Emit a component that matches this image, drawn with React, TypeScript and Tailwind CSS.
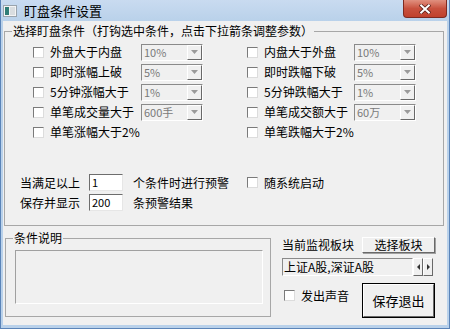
import React from 'react';

const leftRows = [
  { label: '外盘大于内盘', value: '10%' },
  { label: '即时涨幅上破', value: '5%' },
  { label: '5分钟涨幅大于', value: '1%' },
  { label: '单笔成交量大于', value: '600手' },
  { label: '单笔涨幅大于2%', value: '' },
];

const rightRows = [
  { label: '内盘大于外盘', value: '10%' },
  { label: '即时跌幅下破', value: '5%' },
  { label: '5分钟跌幅大于', value: '1%' },
  { label: '单笔成交额大于', value: '60万' },
  { label: '单笔跌幅大于2%', value: '' },
];

function CheckBox() {
  return (
    <span className="block w-[11px] h-[11px] shrink-0 bg-white border border-t-[#7a7a7a] border-l-[#7a7a7a] border-r-[#dcdcdc] border-b-[#dcdcdc]" />
  );
}

function Combo({ value }: { value: string }) {
  return (
    <div className="w-[62px] h-[17px] flex bg-[#f0f0f0] border border-t-[#8a8a8a] border-l-[#8a8a8a] border-r-white border-b-white">
      <span className="flex-1 pl-[2px] text-[#7a7a7a] leading-[15px] text-[11px]">{value}</span>
      <span className="w-[15px] h-[15px] flex items-center justify-center bg-[#f0f0f0] border border-t-white border-l-white border-r-[#696969] border-b-[#696969]">
        <svg width="7" height="4" viewBox="0 0 7 4">
          <path d="M0 0H7L3.5 4Z" fill="#9a9a9a" />
        </svg>
      </span>
    </div>
  );
}

function Field({ value, width }: { value: string; width: string }) {
  return (
    <div className={`${width} h-[17px] bg-white border border-t-[#6d6d6d] border-l-[#6d6d6d] border-r-[#e6e6e6] border-b-[#e6e6e6] pl-[2px] leading-[15px] text-[11px]`}>
      {value}
    </div>
  );
}

function ConditionRow({ label, value, labelWidth }: { label: string; value: string; labelWidth: string }) {
  return (
    <div className="flex items-center">
      <div className={`${labelWidth} flex items-center gap-[6px] whitespace-nowrap`}>
        <CheckBox />
        <span className="leading-[14px]">{label}</span>
      </div>
      {value && <Combo value={value} />}
    </div>
  );
}

export default function App() {
  return (
    <div className="w-[450px] h-[329px] flex flex-col bg-[#b9d1ea] border-l border-r border-b border-[#5b84b8] text-[12px] text-black font-['Noto_Sans_CJK_SC',sans-serif]">
      {/* title bar */}
      <div className="h-[21px] flex items-start bg-gradient-to-b from-[#c9dbf0] to-[#b9d1ea]">
        <svg width="14" height="12" viewBox="0 0 14 12" className="ml-[2px] mt-[5px]">
          <rect x="0.5" y="0.5" width="13" height="11" fill="#f4f4f4" stroke="#9aa4ad" />
          <rect x="2" y="2" width="4" height="8" fill="#2f7d76" />
          <rect x="7" y="2" width="5" height="8" fill="#d9dde0" />
        </svg>
        <span className="ml-[7px] mt-[3px] leading-[15px] text-[13px]">盯盘条件设置</span>
        <div className="ml-auto mr-[2px] w-[44px] h-[18px] rounded-b-[4px] border border-t-0 border-[#7e2a20] bg-gradient-to-b from-[#e0907f] via-[#c8513e] to-[#c0412c] flex items-center justify-center">
          <svg width="12" height="10" viewBox="0 0 12 10">
            <path d="M1 0.5L11 9.5M11 0.5L1 9.5" stroke="#5a2018" strokeWidth="3.6" />
            <path d="M1.4 0.8L10.6 9.2M10.6 0.8L1.4 9.2" stroke="#ffffff" strokeWidth="2" />
          </svg>
        </div>
      </div>

      {/* client area */}
      <div className="flex-1 mx-[2px] mb-[3px] bg-[#f0f0f0] flex flex-col">
        <fieldset className="mt-[3px] ml-[1px] mr-[3px] h-[202px] border border-[#a7a7a7]">
          <legend className="ml-[7px] px-[1px] leading-[14px]">选择盯盘条件（打钩选中条件，点击下拉箭条调整参数）</legend>
          <div className="pt-[4px] pl-[28px] grid grid-cols-[214px_1fr] auto-rows-[20px]">
            {leftRows.map((row, i) => (
              <React.Fragment key={row.label}>
                <ConditionRow label={row.label} value={row.value} labelWidth="w-[108px]" />
                <ConditionRow label={rightRows[i].label} value={rightRows[i].value} labelWidth="w-[107px]" />
              </React.Fragment>
            ))}
          </div>

          <div className="mt-[32px] pl-[15px] flex items-center h-[17px]">
            <span className="w-[69px] whitespace-nowrap">当满足以上</span>
            <Field value="1" width="w-[34px]" />
            <span className="ml-[10px] w-[114px] whitespace-nowrap">个条件时进行预警</span>
            <CheckBox />
            <span className="ml-[6px]">随系统启动</span>
          </div>
          <div className="mt-[3px] pl-[15px] flex items-center h-[17px]">
            <span className="w-[69px] whitespace-nowrap">保存并显示</span>
            <Field value="200" width="w-[34px]" />
            <span className="ml-[10px] whitespace-nowrap">条预警结果</span>
          </div>
        </fieldset>

        <div className="mt-[5px] flex">
          <fieldset className="ml-[2px] w-[266px] h-[86px] border border-[#a7a7a7]">
            <legend className="ml-[7px] px-[1px] leading-[14px]">条件说明</legend>
            <div className="mt-[5px] ml-[9px] w-[248px] h-[54px] border border-t-[#a0a0a0] border-l-[#a0a0a0] border-r-white border-b-white" />
          </fieldset>

          <div className="ml-[11px] mt-[6px] w-[153px] flex flex-col">
            <div className="flex items-center h-[16px]">
              <span className="w-[80px] whitespace-nowrap">当前监视板块</span>
              <button className="w-[73px] h-[16px] leading-[14px] bg-[#f0f0f0] border border-t-white border-l-white border-r-[#696969] border-b-[#696969] shadow-[1px_1px_0_#a0a0a0]">
                选择板块
              </button>
            </div>
            <div className="mt-[5px] flex h-[18px]">
              <div className="w-[131px] h-[18px] bg-[#f0f0f0] border border-t-[#8a8a8a] border-l-[#8a8a8a] border-r-white border-b-white leading-[16px] pl-[1px] whitespace-nowrap">
                上证A股,深证A股
              </div>
              {['M5 1L2 4L5 7Z', 'M2 1L5 4L2 7Z'].map((d) => (
                <div key={d} className="w-[10px] h-[18px] flex items-center justify-center bg-[#f0f0f0] border border-t-white border-l-white border-r-[#696969] border-b-[#696969]">
                  <svg width="7" height="8" viewBox="0 0 7 8">
                    <path d={d} fill="#333" />
                  </svg>
                </div>
              ))}
            </div>
            <div className="mt-[7px] flex">
              <div className="w-[80px] pt-[5px] pl-[2px] flex items-center gap-[6px] h-[20px]">
                <CheckBox />
                <span className="whitespace-nowrap">发出声音</span>
              </div>
              <button className="w-[73px] h-[35px] bg-[#f0f0f0] border border-black">
                <div className="w-full h-full flex items-center justify-center border border-t-white border-l-white border-r-[#696969] border-b-[#696969] text-[13px]">
                  保存退出
                </div>
              </button>
            </div>
          </div>
        </div>
      </div>
    </div>
  );
}
